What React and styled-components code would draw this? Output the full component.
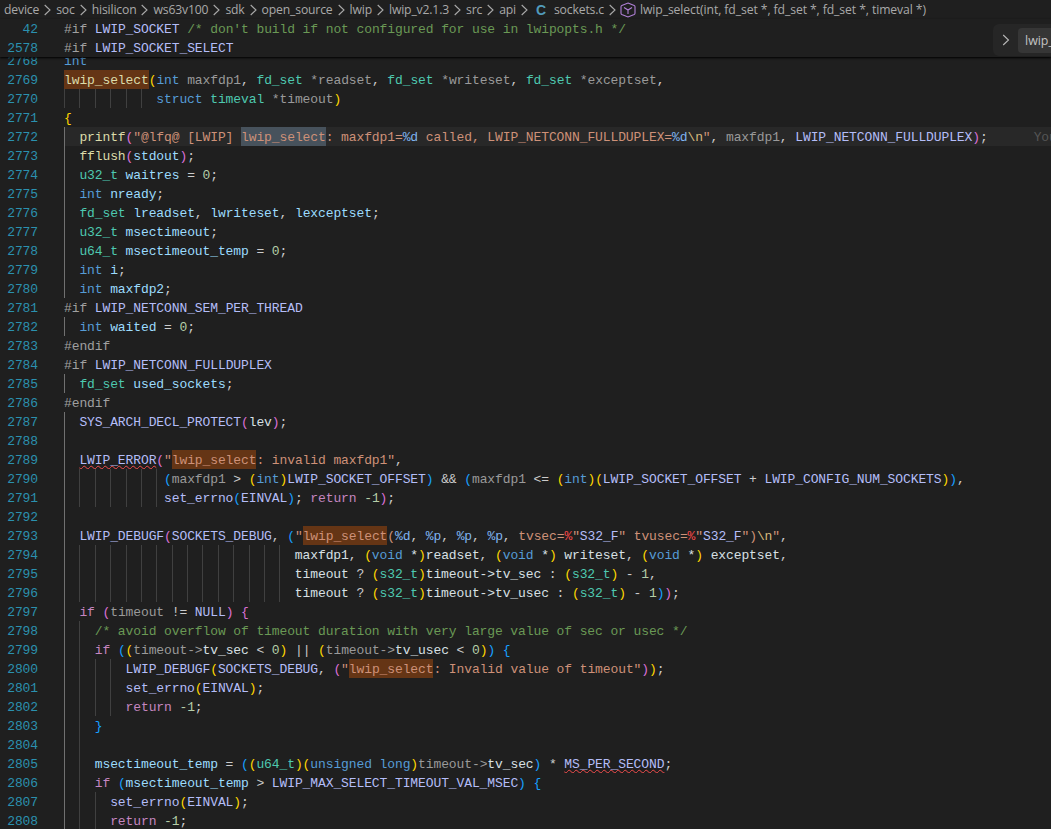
import React from 'react'
import styled, {createGlobalStyle} from 'styled-components'

const CHAR = 7.695
const ROW = 19

const COLORS = {
  k: '#569cd6',
  c: '#c586c0',
  t: '#4ec9b0',
  v: '#9cdcfe',
  g: '#9a9a9a',
  w: '#d8e0e4',
  f: '#dcdcaa',
  m: '#b4bdf8',
  s: '#ce9178',
  e: '#7fb4f0',
  x: '#d7ba7d',
  r: '#f44747',
  n: '#b5cea8',
  o: '#6a9955',
  d: '#a0a0a0',
  y: '#ffd700',
  p: '#da70d6',
  b: '#179fff',
  z: '#cccccc',
}

const Global = createGlobalStyle`
  html, body {
    margin: 0;
    height: 100%;
    overflow: hidden;
    background: #1f1f1f;
  }
`

const Page = styled.div`
  position: relative;
  height: 829px;
  overflow: hidden;
  background: #1f1f1f;
`

const Breadcrumbs = styled.nav`
  display: flex;
  align-items: center;
  gap: 5px;
  height: 19px;
  padding-left: 4px;
  font-family: 'Open Sans', 'Noto Sans', sans-serif;
  font-size: 12.2px;
  letter-spacing: -0.16px;
  color: #a9a9a9;
  white-space: nowrap;
`

const Crumb = styled.span`
  display: inline-flex;
  align-items: center;
  gap: 4px;
`

const SymbolCrumb = styled(Crumb)`
  margin-left: -1px;
  letter-spacing: -0.09px;
`

const FileIcon = styled.span`
  font-family: 'Liberation Sans', sans-serif;
  font-weight: 700;
  font-size: 14px;
  color: #519aba;
  margin: 0 4px 0 3px;
`

const Sticky = styled.section`
  position: relative;
  z-index: 2;
  background: #1f1f1f;
  box-shadow: 0 1px 2px #000;
`

const Code = styled.section`
  margin-top: -6px;
`

const Row = styled.div`
  display: flex;
  height: ${ROW}px;
  line-height: ${ROW + 2}px;
  font-family: 'Liberation Mono', 'DejaVu Sans Mono', monospace;
  font-size: 13px;
  letter-spacing: ${CHAR - 7.8}px;
  white-space: pre;
`

const LineNo = styled.span`
  flex: 0 0 38px;
  margin-right: 26px;
  text-align: right;
  color: #2b91af;
`

const Content = styled.div`
  flex: 1;
  display: flex;
  min-width: 0;
  height: ${ROW}px;
  overflow: hidden;
  background: ${p => (p.$current ? '#282828' : 'transparent')};
`

const Indent = styled.span`
  display: inline-flex;
  flex: none;
  width: ${p => p.$size * CHAR}px;
`

const Guide = styled.span`
  flex: none;
  box-sizing: border-box;
  width: ${CHAR * 2}px;
  height: ${ROW}px;
  border-left: 1px solid ${p => (p.$active ? '#707070' : '#404040')};
`

const Token = styled.span`
  display: inline-block;
  height: ${ROW}px;
  color: ${p => COLORS[p.$kind] || COLORS.z};
  background: ${p => (p.$hit ? '#653515' : p.$sel ? '#47525c' : 'transparent')};
  text-decoration: ${p => (p.$err ? 'underline wavy #f14c4c 1px' : 'none')};
  text-underline-offset: 1px;
`

const Blame = styled.span`
  margin-left: 46px;
  color: #555555;
`

const Peek = styled.aside`
  position: absolute;
  top: 24px;
  left: 993px;
  z-index: 3;
  display: flex;
  align-items: center;
  gap: 8px;
  width: 110px;
  height: 32px;
  padding: 0 0 0 9px;
  box-sizing: border-box;
  background: #262626;
  border-radius: 6px;
`

const PeekChip = styled.span`
  flex: 1;
  height: 25px;
  line-height: 25px;
  padding-left: 7px;
  background: #363636;
  border-radius: 4px;
  font-family: 'Open Sans', sans-serif;
  font-size: 12.4px;
  color: #c4c4c4;
  white-space: nowrap;
`

const Chevron = ({width = 7, color = '#a9a9a9'}) => (
  <svg width={width} height="12" viewBox="0 0 7 12" fill="none">
    <path d="M0.7 1 L6 6 L0.7 11" stroke={color} strokeWidth="1.1" />
  </svg>
)

const CubeIcon = () => (
  <svg width="16" height="16" viewBox="0 0 16 16" fill="none" stroke="#b180d7" strokeWidth="1.1">
    <path d="M8 1 L14.2 3.6 Q15 4 15 4.8 V11.2 Q15 12 14.2 12.4 L8 15 L1.8 12.4 Q1 12 1 11.2 V4.8 Q1 4 1.8 3.6 Z" />
    <path d="M4 5.5 L8 8 L12 5.5 M8 8 V12" />
  </svg>
)

const path = ['device', 'soc', 'hisilicon', 'ws63v100', 'sdk', 'open_source', 'lwip', 'lwip_v2.1.3', 'src', 'api']

const sticky = [
  [42, "<d|#if|> <m|LWIP_SOCKET|> <o|/* don't build if not configured for use in lwipopts.h */|>"],
  [2578, '<d|#if|> <m|LWIP_SOCKET_SELECT|>'],
]

// <kind|text|> with # = find hit, @ = selection match, ~ = squiggle
const first = 2768
const source = [
  '<k|int|>',
  '<f#|lwip_select|><y|(|><k|int|> <g|maxfdp1|>, <t|fd_set|> <g|*readset|>, <t|fd_set|> <g|*writeset|>, <t|fd_set|> <g|*exceptset|>,',
  '            <k|struct|> <t|timeval|> <g|*timeout|><y|)|>',
  '<y|{|>',
  '  <f|printf|><p|(|><s|"@lfq@ [LWIP] |><s@|lwip_select|><s|: maxfdp1=|><e|%d|><s| called, LWIP_NETCONN_FULLDUPLEX=|><e|%d|><x|\\n|><s|"|>, <g|maxfdp1|>, <m|LWIP_NETCONN_FULLDUPLEX|><p|)|>;',
  '  <f|fflush|><p|(|><v|stdout|><p|)|>;',
  '  <t|u32_t|> <v|waitres|> = <n|0|>;',
  '  <k|int|> <v|nready|>;',
  '  <t|fd_set|> <v|lreadset|>, <v|lwriteset|>, <v|lexceptset|>;',
  '  <t|u32_t|> <v|msectimeout|>;',
  '  <t|u64_t|> <v|msectimeout_temp|> = <n|0|>;',
  '  <k|int|> <v|i|>;',
  '  <k|int|> <v|maxfdp2|>;',
  '<d|#if|> <m|LWIP_NETCONN_SEM_PER_THREAD|>',
  '  <k|int|> <v|waited|> = <n|0|>;',
  '<d|#endif|>',
  '<d|#if|> <m|LWIP_NETCONN_FULLDUPLEX|>',
  '  <t|fd_set|> <v|used_sockets|>;',
  '<d|#endif|>',
  '  <m|SYS_ARCH_DECL_PROTECT|><p|(|><w|lev|><p|)|>;',
  '  ',
  '  <m~|LWIP_ERROR|><p|(|><s|"|><s#|lwip_select|><s|: invalid maxfdp1"|>,',
  '             <b|(|><g|maxfdp1|> > <y|(|><k|int|><y|)|><m|LWIP_SOCKET_OFFSET|><b|)|> && <b|(|><g|maxfdp1|> <= <y|(|><k|int|><y|)|><y|(|><m|LWIP_SOCKET_OFFSET|> + <m|LWIP_CONFIG_NUM_SOCKETS|><y|)|><b|)|>,',
  '             <m|set_errno|><b|(|><m|EINVAL|><b|)|>; <c|return|> <n|-1|><p|)|>;',
  '  ',
  '  <m|LWIP_DEBUGF|><p|(|><m|SOCKETS_DEBUG|>, <b|(|><s|"|><s#|lwip_select|><s|(|><e|%d|>, <e|%p|>, <e|%p|>, <e|%p|>, <s|tvsec=|><r|%|><s|"|><m|S32_F|><s|" tvusec=|><r|%|><s|"|><m|S32_F|><s|")|><x|\\n|><s|"|>,',
  '                              <w|maxfdp1|>, <y|(|><k|void|> <w|*|><y|)|><w|readset|>, <y|(|><k|void|> <w|*|><y|)|> <w|writeset|>, <y|(|><k|void|> <w|*|><y|)|> <w|exceptset|>,',
  '                              <w|timeout|> ? <y|(|><t|s32_t|><y|)|><w|timeout->tv_sec|> : <y|(|><t|s32_t|><y|)|> - <n|1|>,',
  '                              <w|timeout|> ? <y|(|><t|s32_t|><y|)|><w|timeout->tv_usec|> : <y|(|><t|s32_t|><y|)|> - <n|1|><b|)|><p|)|>;',
  '  <c|if|> <p|(|><g|timeout|> != <m|NULL|><p|)|> <p|{|>',
  '    <o|/* avoid overflow of timeout duration with very large value of sec or usec */|>',
  '    <c|if|> <b|(|><y|(|><g|timeout->|><w|tv_sec|> < <n|0|><y|)|> || <y|(|><g|timeout->|><w|tv_usec|> < <n|0|><y|)|><b|)|> <b|{|>',
  '        <m|LWIP_DEBUGF|><y|(|><m|SOCKETS_DEBUG|>, <p|(|><s|"|><s#|lwip_select|><s|: Invalid value of timeout"|><p|)|><y|)|>;',
  '        <m|set_errno|><y|(|><m|EINVAL|><y|)|>;',
  '        <c|return|> <n|-1|>;',
  '    <b|}|>',
  '    ',
  '    <v|msectimeout_temp|> = <b|(|><y|(|><t|u64_t|><y|)|><y|(|><k|unsigned long|><y|)|><g|timeout->|><w|tv_sec|><b|)|> * <m~|MS_PER_SECOND|>;',
  '    <c|if|> <b|(|><v|msectimeout_temp|> > <m|LWIP_MAX_SELECT_TIMEOUT_VAL_MSEC|><b|)|> <b|{|>',
  '      <m|set_errno|><y|(|><m|EINVAL|><y|)|>;',
  '      <c|return|> <n|-1|>;',
]

const parse = text => {
  const tokens = []
  const re = /<(\w)([#@~]?)\|(.*?)\|>/g
  let last = 0
  let match
  while ((match = re.exec(text))) {
    if (match.index > last) tokens.push({text: text.slice(last, match.index)})
    tokens.push({kind: match[1], flag: match[2], text: match[3]})
    last = re.lastIndex
  }
  if (last < text.length) tokens.push({text: text.slice(last)})
  return tokens
}

const Line = ({number, text, activeGuide, current}) => {
  const size = text.length - text.trimStart().length
  const guides = Array.from({length: Math.ceil(size / 2)})
  return (
    <Row>
      <LineNo>{number}</LineNo>
      <Content $current={current}>
        {size > 0 && (
          <Indent $size={size}>
            {guides.map((_, i) => (
              <Guide key={i} $active={activeGuide && i === 0} />
            ))}
          </Indent>
        )}
        {parse(text.slice(size)).map((t, i) => (
          <Token key={i} $kind={t.kind} $hit={t.flag === '#'} $sel={t.flag === '@'} $err={t.flag === '~'}>
            {t.text}
          </Token>
        ))}
        {current && <Blame>You</Blame>}
      </Content>
    </Row>
  )
}

export default function App() {
  return (
    <Page>
      <Global />
      <Breadcrumbs>
        {path.map(name => (
          <React.Fragment key={name}>
            <Crumb>{name}</Crumb>
            <Chevron />
          </React.Fragment>
        ))}
        <Crumb>
          <FileIcon>C</FileIcon>
          sockets.c
        </Crumb>
        <Chevron />
        <SymbolCrumb>
          <CubeIcon />
          lwip_select(int, fd_set *, fd_set *, fd_set *, timeval *)
        </SymbolCrumb>
      </Breadcrumbs>
      <Sticky>
        {sticky.map(([number, text]) => (
          <Line key={number} number={number} text={text} />
        ))}
      </Sticky>
      <Code>
        {source.map((text, i) => (
          <Line
            key={first + i}
            number={first + i}
            text={text}
            activeGuide={first + i >= 2772}
            current={first + i === 2772}
          />
        ))}
      </Code>
      <Peek>
        <Chevron width={8} color="#b8b8b8" />
        <PeekChip>lwip_select</PeekChip>
      </Peek>
    </Page>
  )
}
